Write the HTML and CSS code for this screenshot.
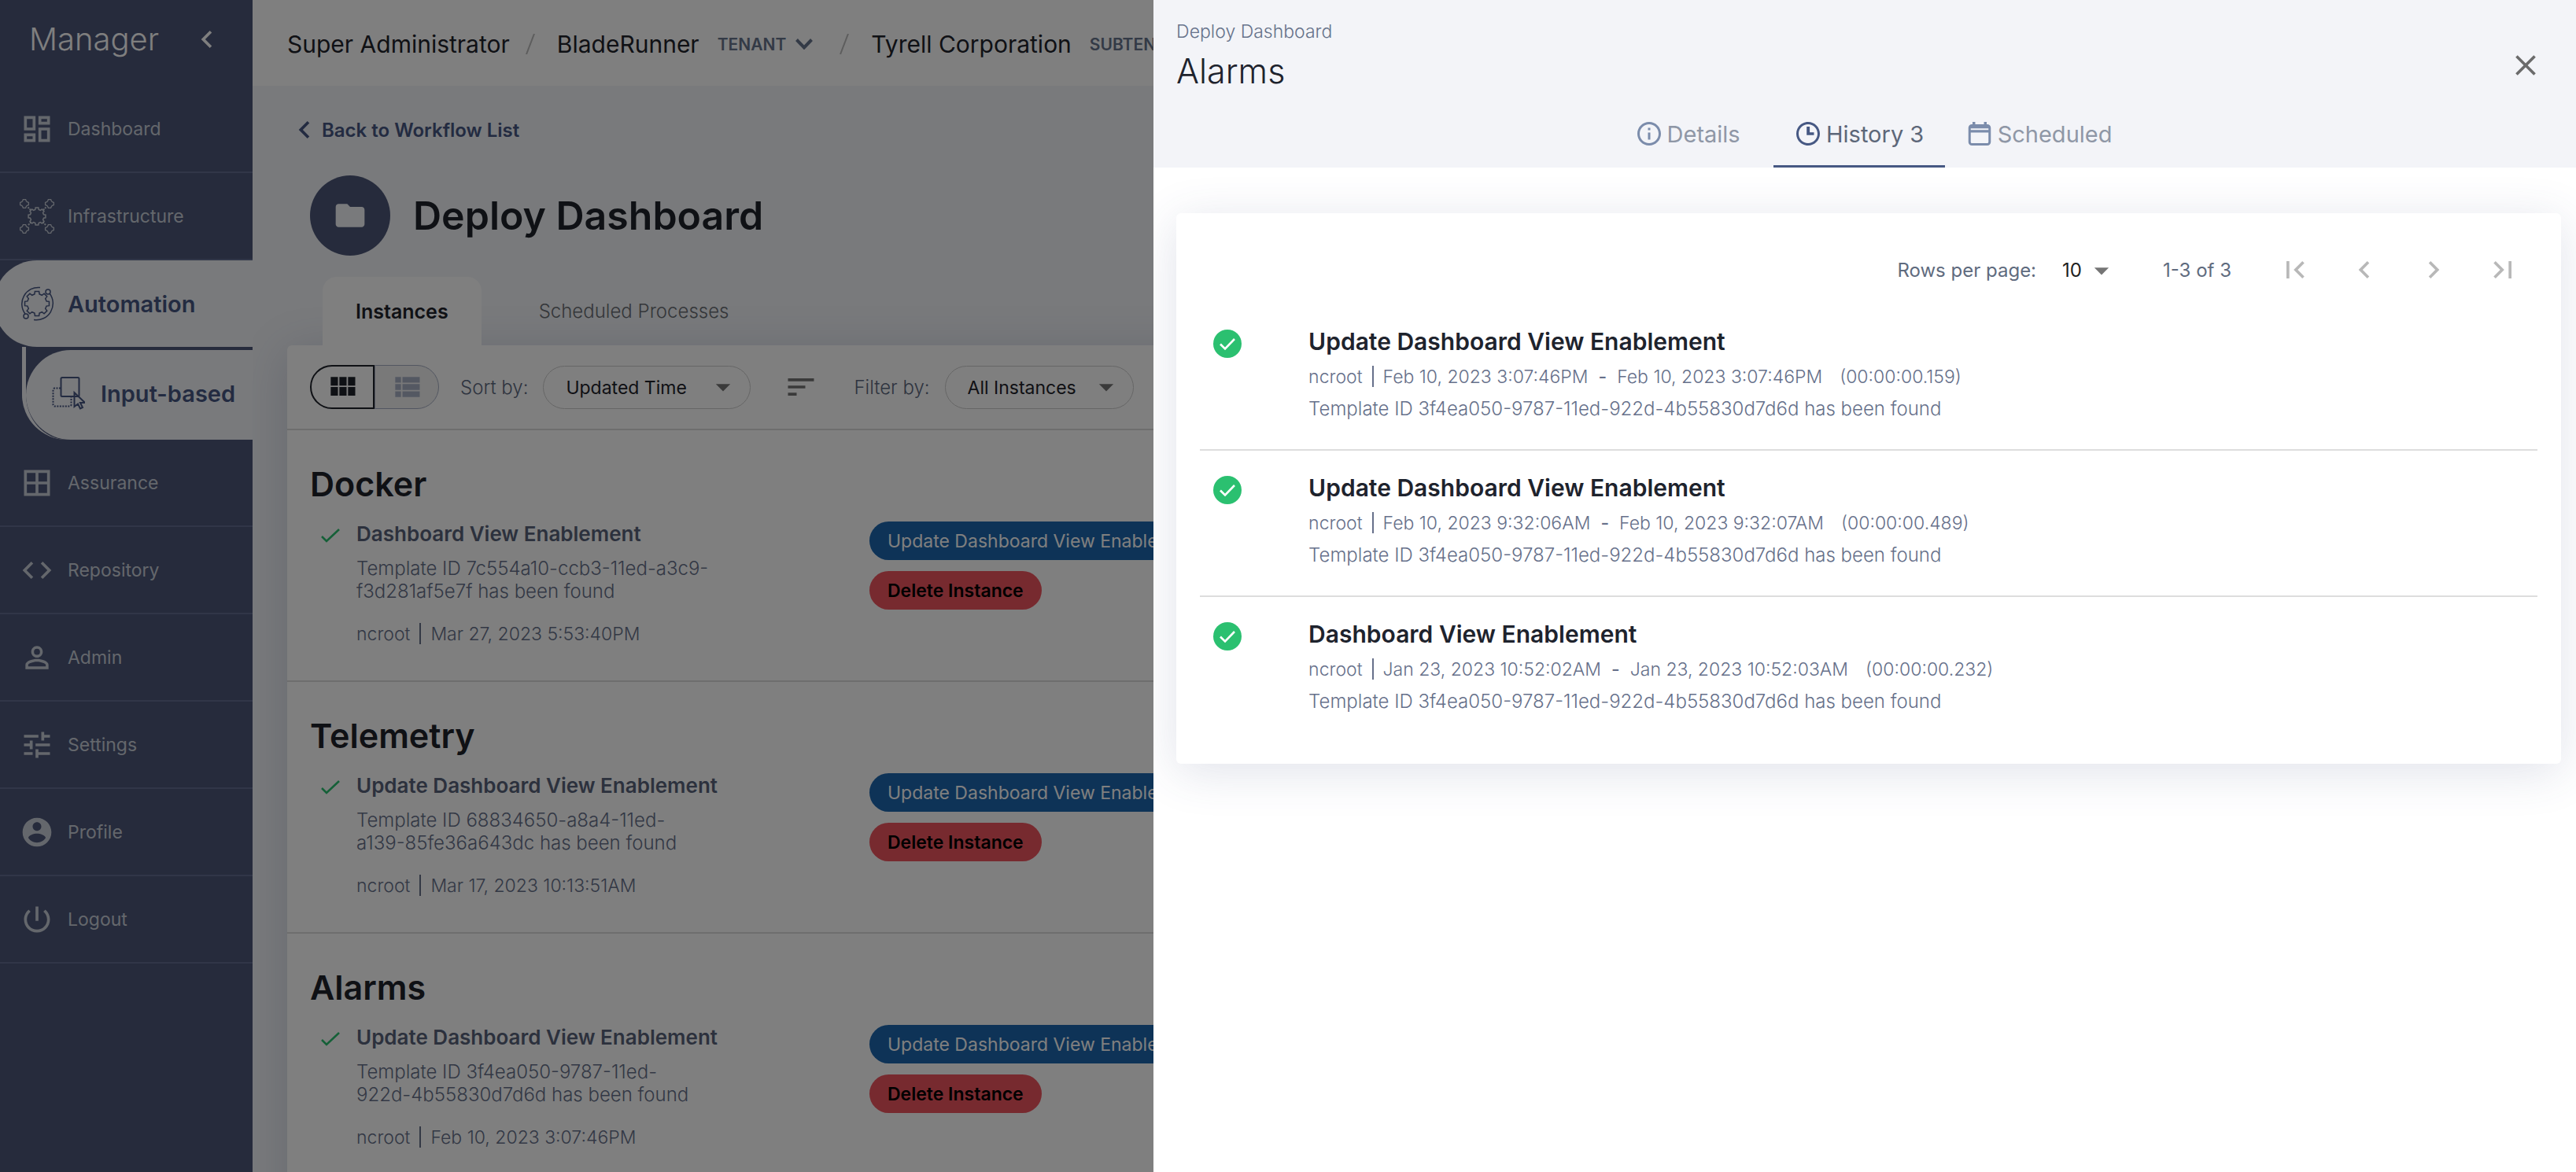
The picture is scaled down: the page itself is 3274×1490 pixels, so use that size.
FILE: index.html
```html
<!DOCTYPE html>
<html lang="en">
<head>
<meta charset="utf-8">
<meta name="viewport" content="width=device-width, initial-scale=1">
<title>Manager - Deploy Dashboard</title>
<link rel="stylesheet" href="styles.css">
</head>
<body>
<svg class="sprite" aria-hidden="true">
  <symbol id="gear" viewBox="-11 -11 22 22"><path d="M7.8-2 10-1.7 10 1.7 7.8 2 6.93 4.1 8.27 5.87 5.87 8.27 4.1 6.93 2 7.8 1.7 10-1.7 10-2 7.8-4.1 6.93-5.87 8.27-8.27 5.87-6.93 4.1-7.8 2-10 1.7-10-1.7-7.8-2-6.93-4.1-8.27-5.87-5.87-8.27-4.1-6.93-2-7.8-1.7-10 1.7-10 2-7.8 4.1-6.93 5.87-8.27 8.27-5.87 6.93-4.1Z" fill="none" stroke="currentColor" stroke-width="1.5" vector-effect="non-scaling-stroke"/></symbol>
  <symbol id="node" viewBox="-7 -7 14 14"><path d="M-1.6-5.4h3.2l.8 2 1 1 2 .8v3.2l-2 .8-1 1-.8 2h-3.2l-.8-2-1-1-2-.8v-3.2l2-.8 1-1z" fill="none" stroke="currentColor" stroke-width="1.3"/></symbol>
  <symbol id="down" viewBox="0 0 24 24"><path d="m7 10 5 5 5-5z"/></symbol>
  <symbol id="left" viewBox="0 0 24 24"><path d="M15.41 7.41 14 6l-6 6 6 6 1.41-1.41L10.83 12z"/></symbol>
  <symbol id="tick" viewBox="0 0 24 18"><path d="m1 10 6 6L23 1" fill="none" stroke="currentColor" stroke-width="2.6"/></symbol>
  <symbol id="done" viewBox="0 0 36 36"><circle cx="18" cy="18" r="18" fill="#2bc070"/><path d="m9 18.500 6 6L27 12" fill="none" stroke="#fff" stroke-width="2.600"/></symbol>
</svg>

<div class="app">
  <aside class="sidebar">
    <div class="brand">
      <span class="brand-name">Manager</span>
      <button class="collapse" type="button" aria-label="Collapse menu"><svg class="icon"><use href="#left"/></svg></button>
    </div>
    <nav aria-label="Main">
      <a class="nav-item" href="#"><svg class="icon" viewBox="0 0 24 24"><path d="M19 5v2h-4V5h4M9 5v6H5V5h4m10 8v6h-4v-6h4M9 17v2H5v-2h4M21 3h-8v6h8V3zM11 3H3v10h8V3zm10 8h-8v10h8V11zm-10 4H3v6h8v-6z"/></svg>Dashboard</a>
      <a class="nav-item" href="#"><svg class="icon" viewBox="0 0 44 44"><use href="#gear" x="10" y="10" width="24" height="24"/><use href="#node" x="-1" y="-1" width="14" height="14"/><use href="#node" x="31" y="-1" width="14" height="14"/><use href="#node" x="-1" y="31" width="14" height="14"/><use href="#node" x="31" y="31" width="14" height="14"/><path d="m10.500 10.500 4 4m15 15 4 4m0-23-4 4m-15 15-4 4" stroke="currentColor" stroke-width="2" stroke-dasharray="2 1"/></svg>Infrastructure</a>
      <a class="nav-item nav-active" href="#"><svg class="icon" viewBox="0 0 44 44"><use href="#gear" x="5" y="5" width="34" height="34"/><path d="M26 1.500A21 21 0 0 0 7 35M18 42.500A21 21 0 0 0 38 9" fill="none" stroke="currentColor" stroke-width="1.500"/><circle cx="36" cy="7" r="3" fill="none" stroke="currentColor" stroke-width="1.500"/><circle cx="8" cy="38" r="3" fill="none" stroke="currentColor" stroke-width="1.500"/></svg>Automation</a>
      <div class="subnav">
        <a class="sub-item" href="#"><svg class="icon icon-line" viewBox="0 0 44 44"><rect x="13.500" y="1" width="23" height="24" rx="1.500"/><path d="M13 14.500H5.500a2 2 0 0 0-2 2v19a2 2 0 0 0 2 2h19a2 2 0 0 0 2-2V26" stroke-dasharray="2 1.500"/><path d="M30.500 20v18l4.500-3.500 3 6 3-1.500-3-6h6z"/></svg>Input-based</a>
      </div>
      <a class="nav-item" href="#"><svg class="icon" viewBox="0 0 24 24"><path d="M3 3v18h18V3H3zm8 16H5v-6h6v6zm0-8H5V5h6v6zm8 8h-6v-6h6v6zm0-8h-6V5h6v6z"/></svg>Assurance</a>
      <a class="nav-item" href="#"><svg class="icon" viewBox="0 0 24 24"><path d="M9.400 16.600 4.800 12l4.600-4.600L8 6l-6 6 6 6 1.400-1.400zm5.200 0 4.600-4.600-4.600-4.600L16 6l6 6-6 6-1.400-1.400z"/></svg>Repository</a>
      <a class="nav-item" href="#"><svg class="icon" viewBox="0 0 24 24"><path d="M12 5.900a2.100 2.100 0 1 1 0 4.200 2.100 2.100 0 0 1 0-4.200m0 9c2.970 0 6.100 1.460 6.100 2.100v1.100H5.900V17c0-.64 3.130-2.100 6.100-2.100M12 4C9.790 4 8 5.790 8 8s1.790 4 4 4 4-1.790 4-4-1.790-4-4-4zm0 9c-2.670 0-8 1.340-8 4v3h16v-3c0-2.660-5.330-4-8-4z"/></svg>Admin</a>
      <a class="nav-item" href="#"><svg class="icon" viewBox="0 0 24 24"><path d="M3 17v2h6v-2H3zM3 5v2h10V5H3zm10 16v-2h8v-2h-8v-2h-2v6h2zM7 9v2H3v2h4v2h2V9H7zm14 4v-2H11v2h10zm-6-4h2V7h4V5h-4V3h-2v6z"/></svg>Settings</a>
      <a class="nav-item" href="#"><svg class="icon" viewBox="0 0 24 24"><path d="M12 2C6.480 2 2 6.480 2 12s4.480 10 10 10 10-4.480 10-10S17.520 2 12 2zm0 3c1.660 0 3 1.340 3 3s-1.340 3-3 3-3-1.340-3-3 1.340-3 3-3zm0 14.200c-2.500 0-4.710-1.280-6-3.220.03-1.990 4-3.080 6-3.080 1.990 0 5.970 1.090 6 3.080-1.290 1.940-3.500 3.220-6 3.220z"/></svg>Profile</a>
      <a class="nav-item" href="#"><svg class="icon" viewBox="0 0 24 24"><path d="M13 3h-2v10h2V3zm4.830 2.170-1.420 1.420C17.990 7.860 19 9.810 19 12c0 3.870-3.130 7-7 7s-7-3.130-7-7c0-2.190 1.010-4.140 2.580-5.420L6.170 5.170C4.230 6.820 3 9.260 3 12c0 4.970 4.030 9 9 9s9-4.030 9-9c0-2.740-1.230-5.180-3.170-6.830z"/></svg>Logout</a>
    </nav>
  </aside>

  <div class="main">
    <header class="topbar">
      <span class="crumb">Super Administrator</span>
      <svg class="slash" viewBox="0 0 12 26"><path d="M11 0 1 26"/></svg>
      <span class="crumb">BladeRunner</span>
      <button class="crumb-kind" type="button">TENANT<svg viewBox="0 0 22 14"><path d="m1.500 1.500 9.500 10 9.500-10"/></svg></button>
      <svg class="slash" viewBox="0 0 12 26"><path d="M11 0 1 26"/></svg>
      <span class="crumb">Tyrell Corporation</span>
      <button class="crumb-kind" type="button">SUBTENANT<svg viewBox="0 0 22 14"><path d="m1.500 1.500 9.500 10 9.500-10"/></svg></button>
    </header>

    <main class="page">
      <a class="back" href="#"><svg class="icon"><use href="#left"/></svg>Back to Workflow List</a>
      <div class="title-row">
        <span class="badge"><svg class="icon" viewBox="0 0 24 24"><path d="M10 4H4c-1.100 0-1.990.9-1.990 2L2 18c0 1.100.9 2 2 2h16c1.100 0 2-.9 2-2V8c0-1.100-.9-2-2-2h-8l-2-2z"/></svg></span>
        <h1>Deploy Dashboard</h1>
      </div>
      <div class="page-tabs" role="tablist">
        <button class="page-tab page-tab-active" type="button" role="tab" aria-selected="true">Instances</button>
        <button class="page-tab" type="button" role="tab" aria-selected="false">Scheduled Processes</button>
      </div>

      <div class="panel">
        <div class="toolbar">
          <div class="toggle">
            <button class="toggle-on" type="button" aria-label="Grid view"><svg class="icon" viewBox="0 0 24 24"><path d="M4 11h5V5H4v6zm0 7h5v-6H4v6zm6 0h5v-6h-5v6zm6 0h5v-6h-5v6zm-6-7h5V5h-5v6zm6-6v6h5V5h-5z"/></svg></button>
            <button class="toggle-off" type="button" aria-label="List view"><svg class="icon" viewBox="0 0 24 24"><path d="M4 14h4v-4H4v4zm0 5h4v-4H4v4zM4 9h4V5H4v4zm5 5h12v-4H9v4zm0 5h12v-4H9v4zM9 5v4h12V5H9z"/></svg></button>
          </div>
          <label class="field-label" for="sort">Sort by:</label>
          <div class="pill-select pill-sort"><select id="sort"><option>Updated Time</option></select><svg class="icon"><use href="#down"/></svg></div>
          <button class="sort-dir" type="button" aria-label="Sort direction"><svg class="icon" viewBox="0 0 24 24"><path d="M3 18h6v-2H3v2zM3 6v2h18V6H3zm0 7h12v-2H3v2z"/></svg></button>
          <label class="field-label" for="filter">Filter by:</label>
          <div class="pill-select pill-filter"><select id="filter"><option>All Instances</option></select><svg class="icon"><use href="#down"/></svg></div>
        </div>

        <section class="instance">
          <h2>Docker</h2>
          <div class="instance-body">
            <div class="instance-info">
              <svg class="tick"><use href="#tick"/></svg>
              <div>
                <h3>Dashboard View Enablement</h3>
                <p class="desc">Template ID 7c554a10-ccb3-11ed-a3c9-<br>f3d281af5e7f has been found</p>
                <p class="meta"><span>ncroot</span><i class="bar"></i><span>Mar 27, 2023 5:53:40PM</span></p>
              </div>
            </div>
            <div class="actions">
              <button class="action update" type="button">Update Dashboard View Enablement</button>
              <button class="action delete" type="button">Delete Instance</button>
            </div>
          </div>
        </section>

        <section class="instance">
          <h2>Telemetry</h2>
          <div class="instance-body">
            <div class="instance-info">
              <svg class="tick"><use href="#tick"/></svg>
              <div>
                <h3>Update Dashboard View Enablement</h3>
                <p class="desc">Template ID 68834650-a8a4-11ed-<br>a139-85fe36a643dc has been found</p>
                <p class="meta"><span>ncroot</span><i class="bar"></i><span>Mar 17, 2023 10:13:51AM</span></p>
              </div>
            </div>
            <div class="actions">
              <button class="action update" type="button">Update Dashboard View Enablement</button>
              <button class="action delete" type="button">Delete Instance</button>
            </div>
          </div>
        </section>

        <section class="instance">
          <h2>Alarms</h2>
          <div class="instance-body">
            <div class="instance-info">
              <svg class="tick"><use href="#tick"/></svg>
              <div>
                <h3>Update Dashboard View Enablement</h3>
                <p class="desc">Template ID 3f4ea050-9787-11ed-<br>922d-4b55830d7d6d has been found</p>
                <p class="meta"><span>ncroot</span><i class="bar"></i><span>Feb 10, 2023 3:07:46PM</span></p>
              </div>
            </div>
            <div class="actions">
              <button class="action update" type="button">Update Dashboard View Enablement</button>
              <button class="action delete" type="button">Delete Instance</button>
            </div>
          </div>
        </section>
      </div>
    </main>
  </div>
</div>

<div class="backdrop"></div>

<div class="drawer" role="dialog" aria-labelledby="drawer-title">
  <header class="drawer-head">
    <div class="drawer-top">
      <div>
        <p class="drawer-parent">Deploy Dashboard</p>
        <h2 id="drawer-title">Alarms</h2>
      </div>
      <button class="close" type="button" aria-label="Close"><svg class="icon" viewBox="0 0 24 24"><path d="M19 6.410 17.590 5 12 10.590 6.410 5 5 6.410 10.590 12 5 17.590 6.410 19 12 13.410 17.590 19 19 17.590 13.410 12z"/></svg></button>
    </div>
    <div class="tabs" role="tablist">
      <button class="tab" type="button" role="tab" aria-selected="false"><svg viewBox="0 0 24 24"><path d="M11 7h2v2h-2zm0 4h2v6h-2zm1-9C6.480 2 2 6.480 2 12s4.480 10 10 10 10-4.480 10-10S17.520 2 12 2zm0 18c-4.410 0-8-3.590-8-8s3.590-8 8-8 8 3.590 8 8-3.590 8-8 8z"/></svg>Details</button>
      <button class="tab tab-active" type="button" role="tab" aria-selected="true"><svg viewBox="0 0 24 24"><path d="M12 2C6.480 2 2 6.480 2 12s4.480 10 10 10 10-4.480 10-10S17.520 2 12 2zm0 18c-4.410 0-8-3.590-8-8s3.590-8 8-8 8 3.590 8 8-3.590 8-8 8zM10.800 6v7.200H17v-2.400h-3.600V6z"/></svg>History 3</button>
      <button class="tab" type="button" role="tab" aria-selected="false"><svg viewBox="0 0 24 24"><path d="M18.500 4H18V2h-2.300v2H8.300V2H6v2h-.5A3 3 0 0 0 2.500 7v12a3 3 0 0 0 3 3h13a3 3 0 0 0 3-3V7a3 3 0 0 0-3-3zm1 15a1 1 0 0 1-1 1h-13a1 1 0 0 1-1-1v-8h15zm0-10.200h-15V7.500h15z"/></svg>Scheduled</button>
    </div>
  </header>

  <div class="card">
    <div class="pager">
      <label class="pager-label" for="rows">Rows per page:</label>
      <div class="rows-select"><select id="rows"><option>10</option></select><svg class="icon"><use href="#down"/></svg></div>
      <span class="pager-count">1-3 of 3</span>
      <button class="page-btn" type="button" aria-label="First page" disabled><svg class="icon" viewBox="0 0 24 24"><path d="M18.410 16.590 13.820 12l4.590-4.590L17 6l-6 6 6 6zM6 6h2v12H6z"/></svg></button>
      <button class="page-btn" type="button" aria-label="Previous page" disabled><svg class="icon"><use href="#left"/></svg></button>
      <button class="page-btn" type="button" aria-label="Next page" disabled><svg class="icon" viewBox="0 0 24 24"><path d="M10 6 8.590 7.410 13.170 12l-4.580 4.590L10 18l6-6z"/></svg></button>
      <button class="page-btn" type="button" aria-label="Last page" disabled><svg class="icon" viewBox="0 0 24 24"><path d="M5.590 7.410 10.180 12l-4.590 4.590L7 18l6-6-6-6zM16 6h2v12h-2z"/></svg></button>
    </div>

    <ul class="history">
      <li>
        <svg class="done"><use href="#done"/></svg>
        <div>
          <h3>Update Dashboard View Enablement</h3>
          <p class="meta"><span>ncroot</span><i class="bar"></i><span>Feb 10, 2023 3:07:46PM</span><b>-</b><span>Feb 10, 2023 3:07:46PM</span><span class="took">(00:00:00.159)</span></p>
          <p class="desc">Template ID 3f4ea050-9787-11ed-922d-4b55830d7d6d has been found</p>
        </div>
      </li>
      <li>
        <svg class="done"><use href="#done"/></svg>
        <div>
          <h3>Update Dashboard View Enablement</h3>
          <p class="meta"><span>ncroot</span><i class="bar"></i><span>Feb 10, 2023 9:32:06AM</span><b>-</b><span>Feb 10, 2023 9:32:07AM</span><span class="took">(00:00:00.489)</span></p>
          <p class="desc">Template ID 3f4ea050-9787-11ed-922d-4b55830d7d6d has been found</p>
        </div>
      </li>
      <li>
        <svg class="done"><use href="#done"/></svg>
        <div>
          <h3>Dashboard View Enablement</h3>
          <p class="meta"><span>ncroot</span><i class="bar"></i><span>Jan 23, 2023 10:52:02AM</span><b>-</b><span>Jan 23, 2023 10:52:03AM</span><span class="took">(00:00:00.232)</span></p>
          <p class="desc">Template ID 3f4ea050-9787-11ed-922d-4b55830d7d6d has been found</p>
        </div>
      </li>
    </ul>
  </div>
</div>
</body>
</html>
```
FILE: styles.css
```css
* { box-sizing: border-box; }
body, h1, h2, h3, p, ul { margin: 0; padding: 0; }
body {
  height: 100vh;
  overflow: hidden;
  background: #f2f4f8;
  font-family: Inter, "Liberation Sans", sans-serif;
  font-size: 24px;
  color: #1e222a;
}
button, select { font: inherit; color: inherit; background: none; border: 0; padding: 0; margin: 0; }
a { text-decoration: none; }
ul { list-style: none; }
.sprite { position: absolute; width: 0; height: 0; }
.icon { width: 44px; height: 44px; flex: none; fill: currentColor; display: block; }
.icon-line { fill: none; stroke: currentColor; stroke-width: 2; }

.app { display: grid; grid-template-columns: 321px 1fr; height: 100vh; overflow: hidden; isolation: isolate; }

/* Sidebar */
.sidebar { background: #4c5678; color: #d4d8e0; overflow: hidden; }
.brand {
  height: 109px;
  padding: 0 36px 10px 37px;
  display: flex;
  align-items: center;
  justify-content: space-between;
  color: #fff;
}
.brand-name { font-size: 40px; font-weight: 300; }
.nav-item {
  height: 111px;
  padding-left: 25px;
  display: flex;
  align-items: center;
  gap: 17px;
  border-bottom: 2px solid #626c90;
  color: #c9cfd9;
  font-size: 23px;
}
.nav-active {
  height: 110px;
  margin-left: -8px;
  padding-left: 33px;
  border: 0;
  border-radius: 55px 0 0 55px;
  background: #f2f4f8;
  color: #465682;
  font-size: 29px;
  font-weight: 600;
}
.subnav {
  margin-left: 28px;
  padding-top: 4px;
  border-left: 5px solid #f2f4f8;
  border-bottom-left-radius: 57px;
}
.sub-item {
  height: 114px;
  padding: 0 0 3px 31px;
  display: flex;
  align-items: center;
  gap: 20px;
  border-radius: 57px 0 0 57px;
  background: #f2f4f8;
  color: #465682;
  font-size: 29px;
  font-weight: 600;
}

/* Top bar */
.main { min-width: 0; overflow: hidden; }
.topbar {
  height: 109px;
  padding: 3px 0 0 44px;
  display: flex;
  align-items: center;
  background: #fff;
  white-space: nowrap;
}
.crumb { font-size: 30px; }
.slash { width: 12px; height: 26px; margin: 0 28px 0 20px; stroke: #bbb; stroke-width: 2; flex: none; }
.crumb-kind {
  margin-left: 23px;
  padding-right: 14px;
  display: flex;
  align-items: center;
  gap: 12px;
  font-size: 21px;
  font-weight: 600;
  color: #66748c;
}
.crumb-kind svg { width: 22px; height: 14px; fill: none; stroke: currentColor; stroke-width: 4; }

/* Page */
.page { padding-left: 44px; }
.back {
  width: max-content;
  height: 50px;
  margin-top: 31px;
  display: flex;
  align-items: center;
  color: #465682;
  font-weight: 600;
}
.title-row { display: flex; align-items: center; gap: 29px; padding-left: 29px; margin-top: 33px; }
.badge {
  width: 102px;
  height: 102px;
  border-radius: 50%;
  background: #4c5678;
  color: #f2f4f8;
  display: grid;
  place-items: center;
}
h1 { font-size: 50px; font-weight: 600; line-height: 62px; }
.page-tabs { display: flex; margin: 27px 0 0 45px; }
.page-tab { height: 87px; padding: 0 73px; font-weight: 300; color: #686c72; position: relative; }
.page-tab-active {
  padding: 0 42px;
  background: #fff;
  border-radius: 18px 18px 0 0;
  font-size: 25px;
  font-weight: 600;
  color: #1e222a;
  z-index: 1;
}
.panel {
  margin-right: 44px;
  min-height: 100vh;
  background: #fff;
  border-radius: 6px 6px 0 0;
  box-shadow: 0 8px 60px rgba(60, 75, 125, .2);
}
.toolbar {
  height: 108px;
  padding-left: 29px;
  display: flex;
  align-items: center;
  border-bottom: 2px solid #ddd;
}
.toggle { display: flex; margin-right: 27px; }
.toggle button { width: 82px; height: 56px; display: grid; place-items: center; }
.toggle .toggle-on { border: 2px solid #1e222a; border-radius: 28px 0 0 28px; }
.toggle .toggle-off { border: 1px solid #a5adc2; border-radius: 0 28px 28px 0; background: #f2f2f2; color: #a9b1c5; }
.field-label { font-size: 24px; font-weight: 300; color: #5d6880; }
.pill-select { position: relative; height: 55px; margin-left: 19px; }
.pill-select select {
  appearance: none;
  width: 100%;
  height: 100%;
  padding: 2px 0 0 28px;
  border: 1px solid #ccc;
  border-radius: 28px;
  font-size: 23px;
}
.pill-select .icon { position: absolute; right: 13px; top: 5px; color: #757575; pointer-events: none; }
.pill-sort { width: 264px; }
.pill-filter { width: 240px; }
.sort-dir { margin: 0 45px 0 42px; color: #757575; }

.instance { height: 320px; padding: 41px 29px 0; border-bottom: 2px solid #ddd; }
.instance h2 { font-size: 43px; font-weight: 600; line-height: 54px; }
.instance-body { display: grid; grid-template-columns: 711px 1fr; margin-top: 21px; }
.instance-info { display: grid; grid-template-columns: 45px 1fr; padding-left: 14px; }
.tick { width: 24px; height: 18px; margin-top: 9px; color: #2bc070; }
.instance h3 { font-size: 26px; font-weight: 600; line-height: 32px; color: #58627a; }
.desc { font-size: 24px; font-weight: 300; line-height: 29px; color: #66708a; }
.instance .desc { margin: 13px 0 25px; }
.meta { display: flex; align-items: center; height: 29px; font-size: 23px; font-weight: 300; color: #66708a; white-space: nowrap; }
.bar { width: 2px; height: 27px; margin: 0 12px; background: currentColor; }
.meta b { font-weight: 500; margin: 0 13px; }
.took { margin-left: 22px; }
.actions { display: flex; flex-direction: column; align-items: flex-start; gap: 14px; }
.action { height: 49px; padding: 0 23px; border-radius: 25px; white-space: nowrap; }
.update { background: #1c66ae; color: #fff; font-size: 23px; }
.delete { background: #ee545e; color: #000; font-size: 23px; font-weight: 600; }

/* Drawer */
.backdrop { position: fixed; inset: 0; background: rgba(0, 0, 0, .5); }
.drawer { position: fixed; top: 0; right: 0; bottom: 0; width: 55.22%; overflow: hidden; background: #fff; }
.drawer-head { background: #f3f4f8; }
.drawer-top { display: flex; justify-content: space-between; align-items: flex-end; padding: 26px 31px 0 29px; }
.drawer-parent { font-size: 23px; font-weight: 300; line-height: 28px; color: #66728a; }
.drawer-top h2 { margin-top: 10px; font-size: 43px; font-weight: 300; line-height: 52px; color: #1e232d; }
.close { width: 66px; height: 66px; display: grid; place-items: center; color: #6b6b6b; }
.tabs { display: flex; justify-content: center; margin-top: 11px; padding-left: 6px; }
.tab {
  min-width: 218px;
  height: 86px;
  padding: 3px 26px 0;
  display: flex;
  align-items: center;
  justify-content: center;
  gap: 5px;
  border-bottom: 3px solid transparent;
  font-size: 29px;
  color: #8f97a6;
}
.tab svg { width: 36px; height: 36px; fill: #7b8cab; }
.tab-active { border-color: #465883; color: #5d6779; }
.tab-active svg { fill: #465883; }

.card {
  margin: 58px 19px 0 29px;
  padding: 28px 30px 26px;
  border-radius: 6px;
  background: #fff;
  box-shadow: 0 10px 60px rgba(60, 75, 125, .16);
}
.pager { height: 88px; display: flex; align-items: center; justify-content: flex-end; color: #5f6b7e; }
.pager-label, .pager-count { font-size: 24px; }
.rows-select { position: relative; width: 72px; margin: 0 56px 0 33px; }
.rows-select select { appearance: none; width: 100%; font-size: 24px; color: #1e1e1e; }
.rows-select .icon { position: absolute; right: 0; top: -7px; color: #757575; pointer-events: none; }
.pager-count { margin-right: 37px; }
.page-btn { width: 88px; height: 88px; display: grid; place-items: center; color: #b8b8b8; }
.history li {
  height: 186px;
  padding: 28px 0 0 17px;
  display: grid;
  grid-template-columns: 121px 1fr;
  align-items: start;
  border-bottom: 2px solid #ddd;
}
.history li:last-child { border: 0; }
.done { width: 36px; height: 36px; margin-top: 4px; }
.history h3 { font-size: 30px; font-weight: 600; line-height: 38px; color: #1e232d; }
.history .meta { margin: 11px 0 12px; }
```
